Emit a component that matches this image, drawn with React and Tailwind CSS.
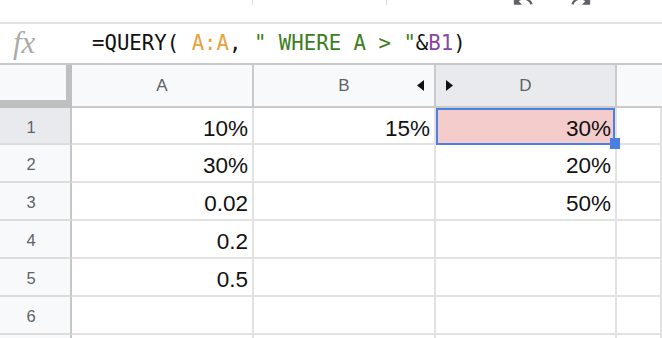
import React from 'react';

const rows = [
  { n: 1, a: '10%', b: '15%', d: '30%', h: 'h-[37px]' },
  { n: 2, a: '30%', d: '20%', h: 'h-[38px]' },
  { n: 3, a: '0.02', d: '50%', h: 'h-[38px]' },
  { n: 4, a: '0.2', h: 'h-[38px]' },
  { n: 5, a: '0.5', h: 'h-[38px]' },
  { n: 6, h: 'h-[38px]' },
  { n: 7, h: 'h-[38px]', hidden: true },
];

function UndoIcon() {
  return (
    <svg width="22" height="22" viewBox="0 0 24 24" fill="#5f6368">
      <path d="M12.5 8c-2.65 0-5.05.99-6.9 2.6L2 7v9h9l-3.62-3.62c1.39-1.16 3.16-1.88 5.12-1.88 3.54 0 6.55 2.31 7.6 5.5l2.37-.78C21.08 11.03 17.15 8 12.5 8z" />
    </svg>
  );
}

function RedoIcon() {
  return (
    <svg width="22" height="22" viewBox="0 0 24 24" fill="#5f6368">
      <path d="M18.4 10.6C16.55 8.99 14.15 8 11.5 8c-4.65 0-8.58 3.03-9.96 7.22L3.9 16c1.05-3.19 4.05-5.5 7.6-5.5 1.95 0 3.73.72 5.12 1.88L13 16h9V7l-3.6 3.6z" />
    </svg>
  );
}

function Cell({ children, className = '' }) {
  return (
    <div className={`flex items-center justify-end pr-[4px] pt-[6px] border-r-2 border-b-2 border-[#e2e2e2] text-[22.5px] text-[#111] ${className}`}>
      {children}
    </div>
  );
}

export default function App() {
  return (
    <div className="w-[662px] h-[338px] overflow-hidden bg-white font-['Liberation_Sans',Arial,sans-serif]">
      {/* toolbar (cut off) */}
      <div className="flex items-start h-[22px] overflow-hidden">
        <div className="ml-[252px] w-px h-[5px] bg-[#dadce0]" />
        <div className="ml-[133px] w-px h-[5px] bg-[#dadce0]" />
        <div className="ml-[125px] -mt-[10px]"><UndoIcon /></div>
        <div className="ml-[36px] -mt-[10px]"><RedoIcon /></div>
      </div>

      {/* formula bar */}
      <div className="h-[43px] flex items-center border-t-2 border-t-[#e3e3e3] border-b-2 border-b-[#c8c8c8] pl-[13px]">
        <span className="w-[79px] font-['Liberation_Serif',serif] italic text-[31px] leading-none text-[#ababab] -mt-[2px]">fx</span>
        <span className="font-['DejaVu_Sans_Mono',monospace] text-[20.7px] text-[#111] whitespace-pre">
          =QUERY( <span className="text-[#e8a13c]">A:A</span>, <span className="text-[#3d7d22]">" WHERE A &gt; "</span>&amp;<span className="text-[#8648a6]">B1</span>)
        </span>
      </div>

      {/* grid */}
      <div className="grid grid-cols-[72px_182px_182px_181px_45px]">
        {/* header row */}
        <div className="h-[43px] bg-[#f8f9fa] border-r-[6px] border-b-[8px] border-[#bfbfbf]" />
        <div className="h-[43px] flex items-center justify-center bg-[#f8f9fa] border-r-2 border-b-2 border-[#cacaca] text-[17px] text-[#5f6368]">A</div>
        <div className="h-[43px] relative flex items-center justify-center bg-[#f8f9fa] border-r-2 border-b-2 border-[#cacaca] text-[17px] text-[#5f6368]">
          B
          <svg className="absolute right-[10px] top-[15px]" width="7" height="11" viewBox="0 0 7 11">
            <path d="M7 0 L0 5.5 L7 11 Z" fill="#111" />
          </svg>
        </div>
        <div className="h-[43px] relative flex items-center justify-center bg-[#e8eaed] border-r-2 border-b-2 border-[#cacaca] text-[17px] text-[#5f6368]">
          D
          <svg className="absolute left-[10px] top-[15px]" width="7" height="11" viewBox="0 0 7 11">
            <path d="M0 0 L7 5.5 L0 11 Z" fill="#111" />
          </svg>
        </div>
        <div className="h-[43px] bg-[#f8f9fa] border-b-2 border-[#cacaca]" />

        {rows.map((r) => (
          <React.Fragment key={r.n}>
            <div className={`${r.h} flex items-center justify-center pr-[8px] pt-[3px] border-r-2 border-r-[#c6c6c6] border-b-2 border-b-[#dcdcdc] text-[16.5px] text-[#5f6368] ${r.n === 1 ? 'bg-[#e8eaed]' : 'bg-[#f8f9fa]'}`}>
              {r.hidden ? '' : r.n}
            </div>
            <Cell className={r.h}>{r.a}</Cell>
            <Cell className={r.h}>{r.b}</Cell>
            {r.n === 1 ? (
              <Cell className={`${r.h} relative bg-[#f4cccc]`}>
                {r.d}
                <div className="absolute left-0 top-0 right-0 -bottom-[2px] border-[2.5px] border-[#4a80e2] z-10" />
                <div className="absolute -right-[5px] -bottom-[6px] w-[10px] h-[11px] bg-[#4a80e2] z-10" />
              </Cell>
            ) : (
              <Cell className={r.h}>{r.d}</Cell>
            )}
            <Cell className={r.h} />
          </React.Fragment>
        ))}
      </div>
    </div>
  );
}
